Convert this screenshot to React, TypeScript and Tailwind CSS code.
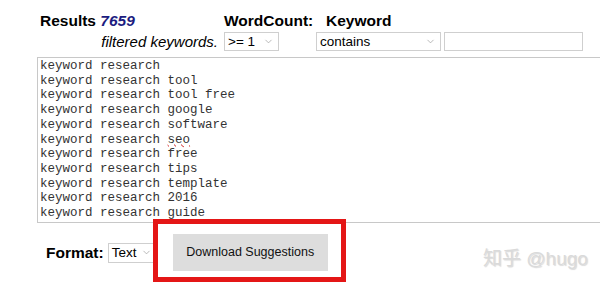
import { ChevronDown } from 'lucide-react'

const KEYWORDS = [
  'keyword research',
  'keyword research tool',
  'keyword research tool free',
  'keyword research google',
  'keyword research software',
  'keyword research seo',
  'keyword research free',
  'keyword research tips',
  'keyword research template',
  'keyword research 2016',
  'keyword research guide',
]

function Select({ value, className }: { value: string; className: string }) {
  return (
    <div
      className={`flex items-center justify-between border border-[#cfcfcf] bg-white pl-[3px] pr-[4px] text-[13.5px] leading-none text-black ${className}`}
    >
      <span>{value}</span>
      <ChevronDown size={11} strokeWidth={1.5} className="text-[#9a9a9a]" />
    </div>
  )
}

export default function App() {
  return (
    <div
      className="relative h-[290px] w-[600px] overflow-hidden bg-white text-black"
      style={{ fontFamily: '"Liberation Sans", Arial, sans-serif' }}
    >
      <div className="pl-[40px] pt-[11px]">
        <div className="grid grid-cols-[184px_92px_128px_139px] items-end">
          <div className="text-[15.5px] font-bold leading-[20px]">
            Results <span className="italic text-[#1c1c80]">7659</span>
          </div>
          <div className="text-[15.5px] font-bold leading-[20px]">WordCount:</div>
          <div className="pl-[10px] text-[15.5px] font-bold leading-[20px]">Keyword</div>
          <div />
        </div>
        <div className="mt-[1px] grid grid-cols-[184px_92px_128px_139px] items-center">
          <div className="pr-[6px] text-right text-[15px] italic leading-[19px]">filtered keywords.</div>
          <Select value=">= 1" className="h-[19px] w-[55px]" />
          <Select value="contains" className="h-[19px] w-[125px]" />
          <div className="h-[19px] w-[139px] border border-[#cfcfcf] bg-white" />
        </div>
      </div>

      <div
        className="ml-[37px] mt-[6px] h-[166px] w-[580px] border border-[#c8c8c8] pl-[2px] pt-[1px] text-[12.5px] leading-[14.7px] text-[#333]"
        style={{ fontFamily: '"Liberation Mono", "Courier New", monospace' }}
      >
        {KEYWORDS.map((k) => {
          const rest = k.slice('keyword research'.length)
          return (
            <div key={k} className="whitespace-pre">
              keyword research
              {rest === ' seo' ? (
                <>
                  {' '}
                  <span className="underline decoration-[#d02020] decoration-wavy decoration-1 underline-offset-[0px]">seo</span>
                </>
              ) : (
                rest
              )}
            </div>
          )
        })}
      </div>

      <div className="ml-[46px] mt-[11px] flex items-center">
        <span className="text-[15.5px] font-bold">Format:</span>
        <Select value="Text" className="ml-[4px] h-[20px] w-[49px]" />
        <div className="ml-[16px] flex h-[37px] w-[155px] items-center justify-center bg-[#dddddd] text-[12.5px] text-[#111]">
          Download Suggestions
        </div>
      </div>

      <div className="absolute left-[153px] top-[219px] h-[63px] w-[193px] border-[5px] border-[#e41616]" />

      <div
        className="absolute left-[483px] top-[245px] text-[19px] text-[#dadada]"
        style={{
          fontFamily: '"Liberation Sans", "Noto Sans CJK SC", sans-serif',
          textShadow: '1px 1px 1px rgba(0,0,0,0.15)',
        }}
      >
        知乎 @hugo
      </div>
    </div>
  )
}
